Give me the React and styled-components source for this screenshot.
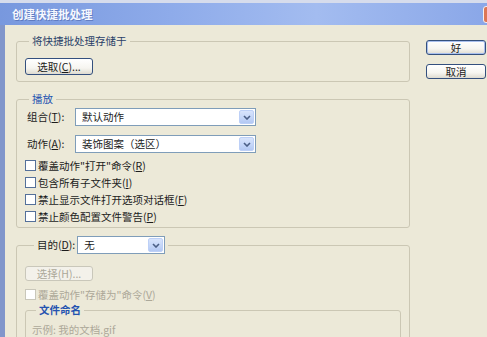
import React from 'react';
import styled, { createGlobalStyle } from 'styled-components';

const Global = createGlobalStyle`
  html, body { margin: 0; padding: 0; background: #ECE9D8; }
  body { font-family: "Noto Sans CJK SC", "Liberation Sans", sans-serif; }
  * { box-sizing: border-box; }
`;

const Window = styled.div`
  width: 487px;
  height: 337px;
  overflow: hidden;
  display: flex;
  flex-direction: column;
  background: #ece9d8;
  font-family: "Noto Sans CJK SC", "Liberation Sans", sans-serif;
  font-size: 10.5px;
  color: #1b1b1b;
`;

const TopEdge = styled.div`
  height: 3px;
  flex: none;
  background: #d6dcec;
`;

const TitleBar = styled.div`
  height: 22px;
  flex: none;
  display: flex;
  align-items: center;
  padding-left: 12px;
  background: linear-gradient(90deg, #7898de 0%, #8eabea 35%, #a3bcf0 65%, #8aa7e8 100%);
  color: #f5f8ff;
  font-weight: bold;
  font-size: 11.5px;
  text-shadow: 1px 1px 0 rgba(40, 60, 130, 0.35);
`;

const CloseBtn = styled.div`
  margin-left: auto;
  margin-right: -17px;
  width: 21px;
  height: 17px;
  border: 1px solid #f4f0f0;
  border-radius: 3px;
  background: #dc7656;
`;

const Frame = styled.div`
  flex: 1;
  display: flex;
  min-height: 0;
`;

const LeftEdge = styled.div`
  width: 5px;
  flex: none;
  background: #8196cb;
`;

const Content = styled.div`
  flex: 1;
  display: flex;
  gap: 16px;
  padding: 9px 0 0 11px;
  min-height: 0;
`;

const MainCol = styled.div`
  width: 394px;
  flex: none;
  display: flex;
  flex-direction: column;
`;

const SideCol = styled.div`
  width: 60px;
  flex: none;
  display: flex;
  flex-direction: column;
  gap: 9px;
  padding-top: 6px;
`;

const Group = styled.fieldset`
  margin: ${p => p.$mt || 0}px 0 0 0;
  padding: ${p => p.$pad};
  border: 1px solid #cbc7b4;
  border-radius: 3px;
  min-inline-size: 0;
  width: ${p => p.$w ? p.$w + 'px' : '100%'};
  flex: none;
`;

const Legend = styled.legend`
  padding: 0 3px;
  margin-left: ${p => p.$ml}px;
  line-height: 14px;
  color: ${p => p.$color || '#1b1b1b'};
  font-weight: ${p => (p.$bold ? 'bold' : 'normal')};
  display: ${p => (p.$flex ? 'flex' : 'block')};
  align-items: center;
  gap: 2px;
`;

const Button = styled.div`
  width: ${p => p.$w}px;
  height: ${p => p.$h}px;
  display: flex;
  align-items: center;
  justify-content: center;
  border: 1px solid ${p => (p.$disabled ? '#c9c7ba' : '#34507e')};
  border-radius: 3px;
  background: ${p =>
    p.$disabled
      ? '#f3f1ea'
      : 'linear-gradient(180deg, #ffffff 0%, #f6f5f0 60%, #dedbd0 100%)'};
  box-shadow: ${p => (p.$default ? 'inset 0 0 0 1px #a9c0ee' : 'none')};
  color: ${p => (p.$disabled ? '#aca899' : '#1b1b1b')};
  line-height: 14px;
  flex: none;
`;

const FieldRow = styled.div`
  display: flex;
  align-items: center;
  height: 18px;
  margin-top: ${p => p.$mt || 0}px;
  padding-left: 2px;
`;

const FieldLabel = styled.span`
  width: 48px;
  flex: none;
  line-height: 14px;
`;

const Select = styled.div`
  width: ${p => p.$w}px;
  height: 18px;
  flex: none;
  display: flex;
  align-items: center;
  border: 1px solid #7f9db9;
  background: #fff;
  padding: 1px 1px 1px 6px;
  color: #1b1b1b;
  font-weight: normal;
`;

const SelectText = styled.span`
  flex: 1;
  line-height: 14px;
`;

const DropBtn = styled.div`
  width: 15px;
  height: 100%;
  display: flex;
  align-items: center;
  justify-content: center;
  border: 1px solid #bdd0f7;
  border-radius: 2px;
  background: linear-gradient(180deg, #d8e4fc 0%, #c3d5f8 60%, #b3c8f3 100%);
`;

const CheckList = styled.div`
  display: flex;
  flex-direction: column;
  margin-top: ${p => p.$mt || 0}px;
`;

const CheckRow = styled.div`
  display: flex;
  align-items: center;
  gap: 2px;
  height: 17px;
  color: ${p => (p.$disabled ? '#aca899' : '#1b1b1b')};
  line-height: 14px;
`;

const Box = styled.span`
  width: 11px;
  height: 11px;
  flex: none;
  border: 1px solid ${p => (p.$disabled ? '#c9c7ba' : '#54709a')};
  background: #fff;
`;

const Sample = styled.div`
  color: #aca899;
  line-height: 14px;
`;

const Chevron = () => (
  <svg width="8" height="5" viewBox="0 0 8 5">
    <path d="M1 1 L4 4 L7 1" fill="none" stroke="#4b5f86" strokeWidth="1.6" />
  </svg>
);

const Dropdown = ({ w, children }) => (
  <Select $w={w}>
    <SelectText>{children}</SelectText>
    <DropBtn>
      <Chevron />
    </DropBtn>
  </Select>
);

const Check = ({ disabled, children }) => (
  <CheckRow $disabled={disabled}>
    <Box $disabled={disabled} />
    <span>{children}</span>
  </CheckRow>
);

export default function App() {
  return (
    <>
      <Global />
      <Window>
        <TopEdge />
        <TitleBar>
          创建快捷批处理
          <CloseBtn />
        </TitleBar>
        <Frame>
          <LeftEdge />
          <Content>
            <MainCol>
              <Group $pad="10px 8px 6px 8px">
                <Legend $ml={4} $color="#2a3f68">将快捷批处理存储于</Legend>
                <Button $w={68} $h={17}>
                  选取(<u>C</u>)...
                </Button>
              </Group>

              <Group $mt={10} $pad="2px 8px 2px 8px">
                <Legend $ml={4} $color="#2453b0">播放</Legend>
                <FieldRow>
                  <FieldLabel>
                    组合(<u>T</u>):
                  </FieldLabel>
                  <Dropdown w={181}>默认动作</Dropdown>
                </FieldRow>
                <FieldRow $mt={9}>
                  <FieldLabel>
                    动作(<u>A</u>):
                  </FieldLabel>
                  <Dropdown w={181}>装饰图案（选区）</Dropdown>
                </FieldRow>
                <CheckList $mt={4}>
                  <Check>
                    覆盖动作"打开"命令(<u>R</u>)
                  </Check>
                  <Check>
                    包含所有子文件夹(<u>I</u>)
                  </Check>
                  <Check>
                    禁止显示文件打开选项对话框(<u>F</u>)
                  </Check>
                  <Check>
                    禁止颜色配置文件警告(<u>P</u>)
                  </Check>
                </CheckList>
              </Group>

              <Group $mt={8} $pad="12px 8px 0 8px">
                <Legend $ml={9} $flex>
                  <span>
                    目的(<u>D</u>):
                  </span>
                  <Dropdown w={88}>无</Dropdown>
                </Legend>
                <Button $w={68} $h={15} $disabled>
                  选择(H)...
                </Button>
                <CheckList $mt={5}>
                  <Check disabled>
                    覆盖动作"存储为"命令(<u>V</u>)
                  </Check>
                </CheckList>
                <Group $w={376} $pad="6px 6px 6px 6px">
                  <Legend $ml={4} $color="#2453b0" $bold>
                    文件命名
                  </Legend>
                  <Sample>示例: 我的文档.gif</Sample>
                </Group>
              </Group>
            </MainCol>

            <SideCol>
              <Button $w={60} $h={15} $default>
                好
              </Button>
              <Button $w={60} $h={15}>
                取消
              </Button>
            </SideCol>
          </Content>
        </Frame>
      </Window>
    </>
  );
}
